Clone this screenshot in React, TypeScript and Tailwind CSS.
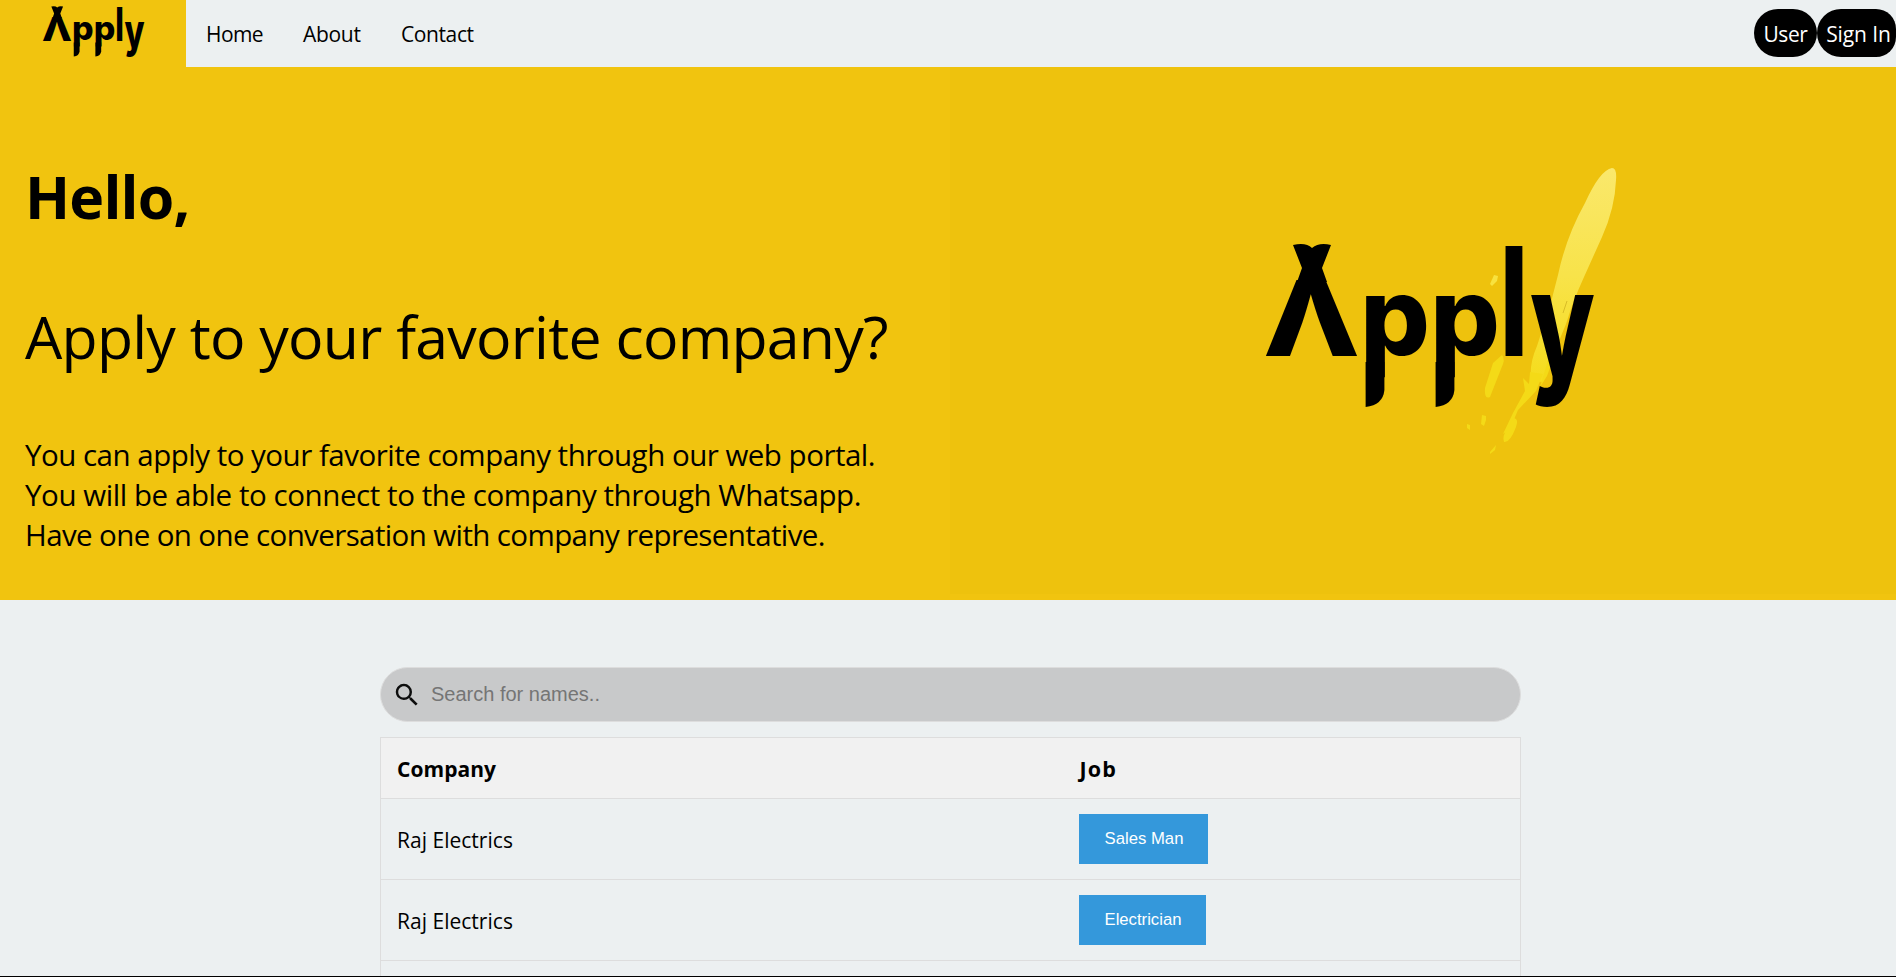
import React from "react";

const jobs = [
  { company: "Raj Electrics", job: "Sales Man", width: "w-[129px]" },
  { company: "Raj Electrics", job: "Electrician", width: "w-[127px]" },
];

const glyph = "font-['Inter',sans-serif] font-extrabold";

/** Wordmark lettering, set in a 327 x 164 box. */
function Wordmark() {
  return (
    <g fill="#000">
      <path d="M27 1 Q40 -2 46 4 Q53 -2 65 1 L56 24 L61 38 H31 L36 24Z" />
      <text className={glyph} fontSize="105" x="-3" y="112" textLength="97" lengthAdjust="spacingAndGlyphs">Λ</text>
      <text className={glyph} fontSize="108" x="94" y="111" textLength="70" lengthAdjust="spacingAndGlyphs">p</text>
      <path d="M99.6 118 H118.4 V146 Q117 161 99.6 163Z" />
      <text className={glyph} fontSize="108" x="164" y="111" textLength="70" lengthAdjust="spacingAndGlyphs">p</text>
      <path d="M169.6 118 H188.4 V146 Q187 161 169.6 163Z" />
      <text className={glyph} fontSize="151" x="234" y="112" textLength="28" lengthAdjust="spacingAndGlyphs">l</text>
      <text className={glyph} fontSize="148" x="264" y="132" textLength="65" lengthAdjust="spacingAndGlyphs">y</text>
    </g>
  );
}

function HeroArt() {
  return (
    <svg width="400" height="320" viewBox="0 0 400 320" role="img" aria-label="Apply">
      <defs>
        <linearGradient id="brush" x1="0" y1="0" x2="0" y2="1">
          <stop offset="0" stopColor="#fae86c" />
          <stop offset="0.5" stopColor="#f8e34a" />
          <stop offset="1" stopColor="#f5dc1c" />
        </linearGradient>
      </defs>
      <path
        fill="url(#brush)"
        d="M372 18 Q377 18 376 30 Q375 58 362 87 L344 127 Q333 151 326 174 L312 208 L303 232 L291 231 Q289 214 297 196 L310 156 L318 125 Q326 87 345 53 Q360 20 372 18Z"
      />
      <g fill="#f4da17">
        <path d="M290 222 L303 224 L296 241 L278 260 L270 279 L263 284 L273 263 L285 241 L283 228 L289 234Z" />
        <path d="M309 207 L314 207 L307 226 L300 237Z" />
        <path d="M262 205 Q266 209 261 219 L250 247 Q244 250 245 238 L253 213Z" />
        <path d="M274 268 Q279 269 276 277 Q270 293 264 292 Q262 286 267 279Z" />
        <path d="M250 134 L254 125 L258 126 L257 131 L252 136Z" fill="#f8e23f" />
        <path d="M242 265 L246 266 L246 270 L244 276 L241 274Z" />
        <path d="M227 274 L230 275 L230 280 L227 278Z" />
        <path d="M250 302 L256 295 L255 300 L250 304Z" />
      </g>
      <path d="M327 151 L323 163" stroke="#d9bd27" strokeWidth="1" />
      <g transform="translate(26 94)">
        <Wordmark />
      </g>
    </svg>
  );
}

export default function App() {
  return (
    <div className="flex h-[977px] w-[1896px] flex-col overflow-hidden border-b border-black bg-[#ecf0f1] font-['Open_Sans',sans-serif] text-black">
      <header className="flex h-[67px] shrink-0">
        <a className="block h-full w-[186px] bg-[#f1c40f] pt-[6px] pl-[43px]">
          <svg className="overflow-visible" width="101" height="51" viewBox="0 0 327 164" role="img" aria-label="Apply">
            <Wordmark />
          </svg>
        </a>
        <nav className="flex items-center pt-[3px] pl-5 text-[21px]">
          <a className="w-[97px] tracking-[-0.6px]">Home</a>
          <a className="w-[98px] tracking-[-0.3px]">About</a>
          <a className="tracking-[-0.4px]">Contact</a>
        </nav>
        <div className="ml-auto flex items-center pb-px text-[21px] whitespace-nowrap text-white">
          <a className="flex h-12 w-[63px] items-center justify-center rounded-[24px] bg-black pt-1 tracking-[-0.4px]">User</a>
          <a className="flex h-12 w-[79px] items-center justify-center rounded-l-[24px] rounded-r-[20px] bg-black pt-1 pl-1 tracking-[-0.1px]">Sign In</a>
        </div>
      </header>

      <section className="flex h-[533px] shrink-0 bg-[#f1c40f]">
        <div className="w-[950px] pl-[25px] whitespace-nowrap">
          <h1 className="mt-[89px] h-[80px] text-[59px] leading-[80px] font-bold tracking-[-0.8px]">Hello,</h1>
          <h2 className="mt-[60px] h-[80px] text-[59px] leading-[80px] tracking-[-0.76px]">Apply to your favorite company?</h2>
          <p className="mt-[59px] flex flex-col text-[29.5px] leading-10">
            <span className="tracking-[-0.5px]">You can apply to your favorite company through our web portal.</span>
            <span className="tracking-[-0.43px]">You will be able to connect to the company through Whatsapp.</span>
            <span className="tracking-[-0.61px]">Have one on one conversation with company representative.</span>
          </p>
        </div>
        <div className="h-[527px] w-[946px] bg-[#eec20d] pt-[83px] pl-[290px]">
          <HeroArt />
        </div>
      </section>

      <main className="ml-[380px] w-[1141px] pt-[67px]">
        <label className="flex h-[55px] items-center rounded-full border border-[#ddd] bg-[#c8c9ca] pl-[11px] font-['Liberation_Sans',sans-serif] text-[20px] text-[#757575]">
          <svg width="30" height="30" viewBox="0 0 24 24" fill="#0d0d0d" aria-hidden="true">
            <path d="M15.5 14h-.79l-.28-.27A6.471 6.471 0 0 0 16 9.5 6.5 6.5 0 1 0 9.5 16c1.61 0 3.09-.59 4.23-1.57l.27.28v.79l5 4.99L20.49 19l-4.99-5zm-6 0C7.01 14 5 11.99 5 9.5S7.01 5 9.5 5 14 7.01 14 9.5 11.99 14 9.5 14z" />
          </svg>
          <input
            className="ml-[9px] w-[1000px] bg-transparent pb-[2px] outline-none placeholder:text-[#757575]"
            placeholder="Search for names.."
          />
        </label>
        <table className="mt-[15px] w-full table-fixed border-collapse border border-[#ddd] text-left text-[22px]">
          <thead>
            <tr className="h-[61px] border-b border-[#ddd] bg-[#f1f1f1]">
              <th className="w-[682px] pt-[3px] pl-4 text-[21px] font-bold tracking-[0.05px]">Company</th>
              <th className="pt-[3px] pl-[17px] text-[21.5px] font-bold tracking-[1.2px]">Job</th>
            </tr>
          </thead>
          <tbody>
            {jobs.map((row) => (
              <tr key={row.job} className="h-[81px] border-b border-[#ddd]">
                <td className="pt-1 pl-4 text-[21px] tracking-[0.02px]">{row.company}</td>
                <td className="pl-4">
                  <button className={`block h-[50px] bg-[#3498db] pl-[2px] font-['Liberation_Sans',sans-serif] text-[16.7px] text-white ${row.width}`}>
                    {row.job}
                  </button>
                </td>
              </tr>
            ))}
            <tr className="h-[81px]">
              <td />
              <td />
            </tr>
          </tbody>
        </table>
      </main>
    </div>
  );
}
